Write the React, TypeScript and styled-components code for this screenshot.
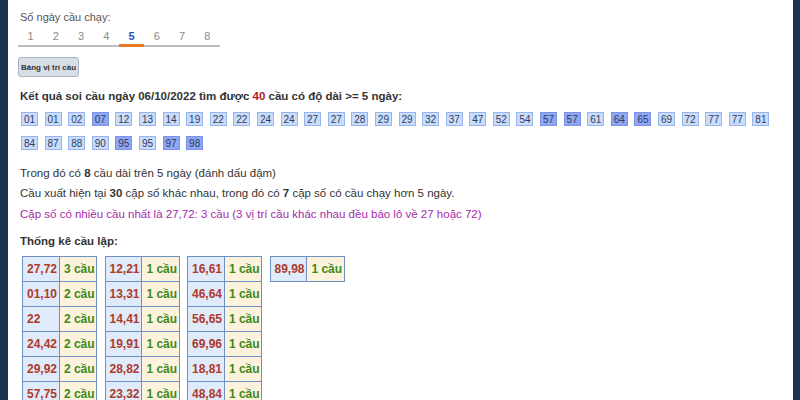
import React from 'react'
import styled, { createGlobalStyle } from 'styled-components'

const GlobalStyle = createGlobalStyle`
  body {
    margin: 0;
    background: #1c3352;
    font-family: "Liberation Sans", Arial, sans-serif;
  }
`

const Page = styled.div`
  width: 785px;
  min-height: 400px;
  margin-left: 8px;
  box-sizing: border-box;
  padding: 10px 12px 0 12px;
  background: #fff;
  color: #333;
`

const DaysLabel = styled.div`
  font-size: 11px;
  line-height: 14px;
  color: #555;
`

const TabBar = styled.div`
  display: flex;
  width: 202px;
  margin-left: -2px;
  border-bottom: 2px solid #bdbdbd;
`

const Tab = styled.div<{ $active?: boolean }>`
  width: 25.25px;
  box-sizing: border-box;
  padding-top: 5px;
  height: 23px;
  margin-bottom: -2px;
  text-align: center;
  font-size: 11px;
  line-height: 14px;
  color: ${(p) => (p.$active ? '#1f4fc4' : '#8a8a8a')};
  font-weight: ${(p) => (p.$active ? 'bold' : 'normal')};
  border-bottom: 3px solid ${(p) => (p.$active ? '#ea7a26' : 'transparent')};
`

const MapButton = styled.button`
  display: block;
  margin: 10px 0 0 -2px;
  height: 20px;
  width: 61px;
  padding: 0;
  background: #d8dee6;
  border: 1px solid #aab5c3;
  border-radius: 3px;
  font-family: "Liberation Sans", Arial, sans-serif;
  font-size: 8px;
  font-weight: bold;
  color: #333;
`

const Heading = styled.h3`
  margin: 11px 0 0;
  font-size: 11.5px;
  line-height: 16px;
  font-weight: bold;
  color: #333;
`

const Red = styled.span`
  color: #b01c1c;
`

const NumberGrid = styled.div`
  display: flex;
  flex-wrap: wrap;
  column-gap: 6.6px;
  row-gap: 10.4px;
  margin: 8px 0 0 1px;
`

const NumBox = styled.span<{ $strong?: boolean }>`
  width: 17px;
  height: 14px;
  box-sizing: border-box;
  display: flex;
  align-items: center;
  justify-content: center;
  font-size: 10px;
  color: #2e3d5e;
  background: ${(p) => (p.$strong ? '#8ea6f3' : '#cadcfb')};
  border: 1px solid ${(p) => (p.$strong ? '#7a93e6' : '#97b5ea')};
`

const Para = styled.p<{ $accent?: boolean }>`
  margin: 0;
  font-size: 11.5px;
  line-height: 20.4px;
  color: ${(p) => (p.$accent ? '#a52aa9' : '#333')};
`

const FirstPara = styled(Para)`
  margin-top: 12.5px;
`

const SubHeading = styled(Heading)`
  margin-top: 8.4px;
`

const Tables = styled.div`
  display: flex;
  align-items: flex-start;
  gap: 7.5px;
  margin: 7.7px 0 0 2px;
`

const StatTable = styled.table`
  border-collapse: collapse;
  width: 75px;
`

const Cell = styled.td<{ $count?: boolean }>`
  width: 37.5px;
  height: 25px;
  box-sizing: border-box;
  padding: 0 0 0 4px;
  border: 1px solid #6f90c2;
  white-space: nowrap;
  font-size: 12px;
  font-weight: bold;
  background: ${(p) => (p.$count ? '#fdf2dc' : '#dfeafa')};
  color: ${(p) => (p.$count ? '#3b8a1c' : '#ae3a2c')};
`

const tabs = [1, 2, 3, 4, 5, 6, 7, 8]

const numbers: [string, boolean][] = [
  ['01', false], ['01', false], ['02', false], ['07', true], ['12', false], ['13', false],
  ['14', false], ['19', false], ['22', false], ['22', false], ['24', false], ['24', false],
  ['27', false], ['27', false], ['28', false], ['29', false], ['29', false], ['32', false],
  ['37', false], ['47', false], ['52', false], ['54', false], ['57', true], ['57', true],
  ['61', false], ['64', true], ['65', true], ['69', false], ['72', false], ['77', false],
  ['77', false], ['81', false], ['84', false], ['87', false], ['88', false], ['90', false],
  ['95', true], ['95', false], ['97', true], ['98', true],
]

const tables: [string, string][][] = [
  [['27,72', '3 cầu'], ['01,10', '2 cầu'], ['22', '2 cầu'], ['24,42', '2 cầu'], ['29,92', '2 cầu'], ['57,75', '2 cầu']],
  [['12,21', '1 cầu'], ['13,31', '1 cầu'], ['14,41', '1 cầu'], ['19,91', '1 cầu'], ['28,82', '1 cầu'], ['23,32', '1 cầu']],
  [['16,61', '1 cầu'], ['46,64', '1 cầu'], ['56,65', '1 cầu'], ['69,96', '1 cầu'], ['18,81', '1 cầu'], ['48,84', '1 cầu']],
  [['89,98', '1 cầu']],
]

const App = () => {
  return (
    <>
      <GlobalStyle />
      <Page>
        <DaysLabel>Số ngày cầu chạy:</DaysLabel>
        <TabBar>
          {tabs.map((t) => (
            <Tab key={t} $active={t === 5}>{t}</Tab>
          ))}
        </TabBar>
        <MapButton>Bảng vị trí cầu</MapButton>

        <Heading>
          Kết quả soi cầu ngày 06/10/2022 tìm được <Red>40</Red> cầu có độ dài &gt;= 5 ngày:
        </Heading>
        <NumberGrid>
          {numbers.map(([n, strong], i) => (
            <NumBox key={i} $strong={strong}>{n}</NumBox>
          ))}
        </NumberGrid>

        <FirstPara>Trong đó có <b>8</b> cầu dài trên 5 ngày (đánh dấu đậm)</FirstPara>
        <Para>Cầu xuất hiện tại <b>30</b> cặp số khác nhau, trong đó có <b>7</b> cặp số có cầu chạy hơn 5 ngày.</Para>
        <Para $accent>Cặp số có nhiều cầu nhất là 27,72: 3 cầu (3 vị trí cầu khác nhau đều báo lô về 27 hoặc 72)</Para>

        <SubHeading>Thống kê cầu lập:</SubHeading>
        <Tables>
          {tables.map((rows, ti) => (
            <StatTable key={ti}>
              <tbody>
                {rows.map(([pair, count]) => (
                  <tr key={pair}>
                    <Cell>{pair}</Cell>
                    <Cell $count>{count}</Cell>
                  </tr>
                ))}
              </tbody>
            </StatTable>
          ))}
        </Tables>
      </Page>
    </>
  )
}

export default App
